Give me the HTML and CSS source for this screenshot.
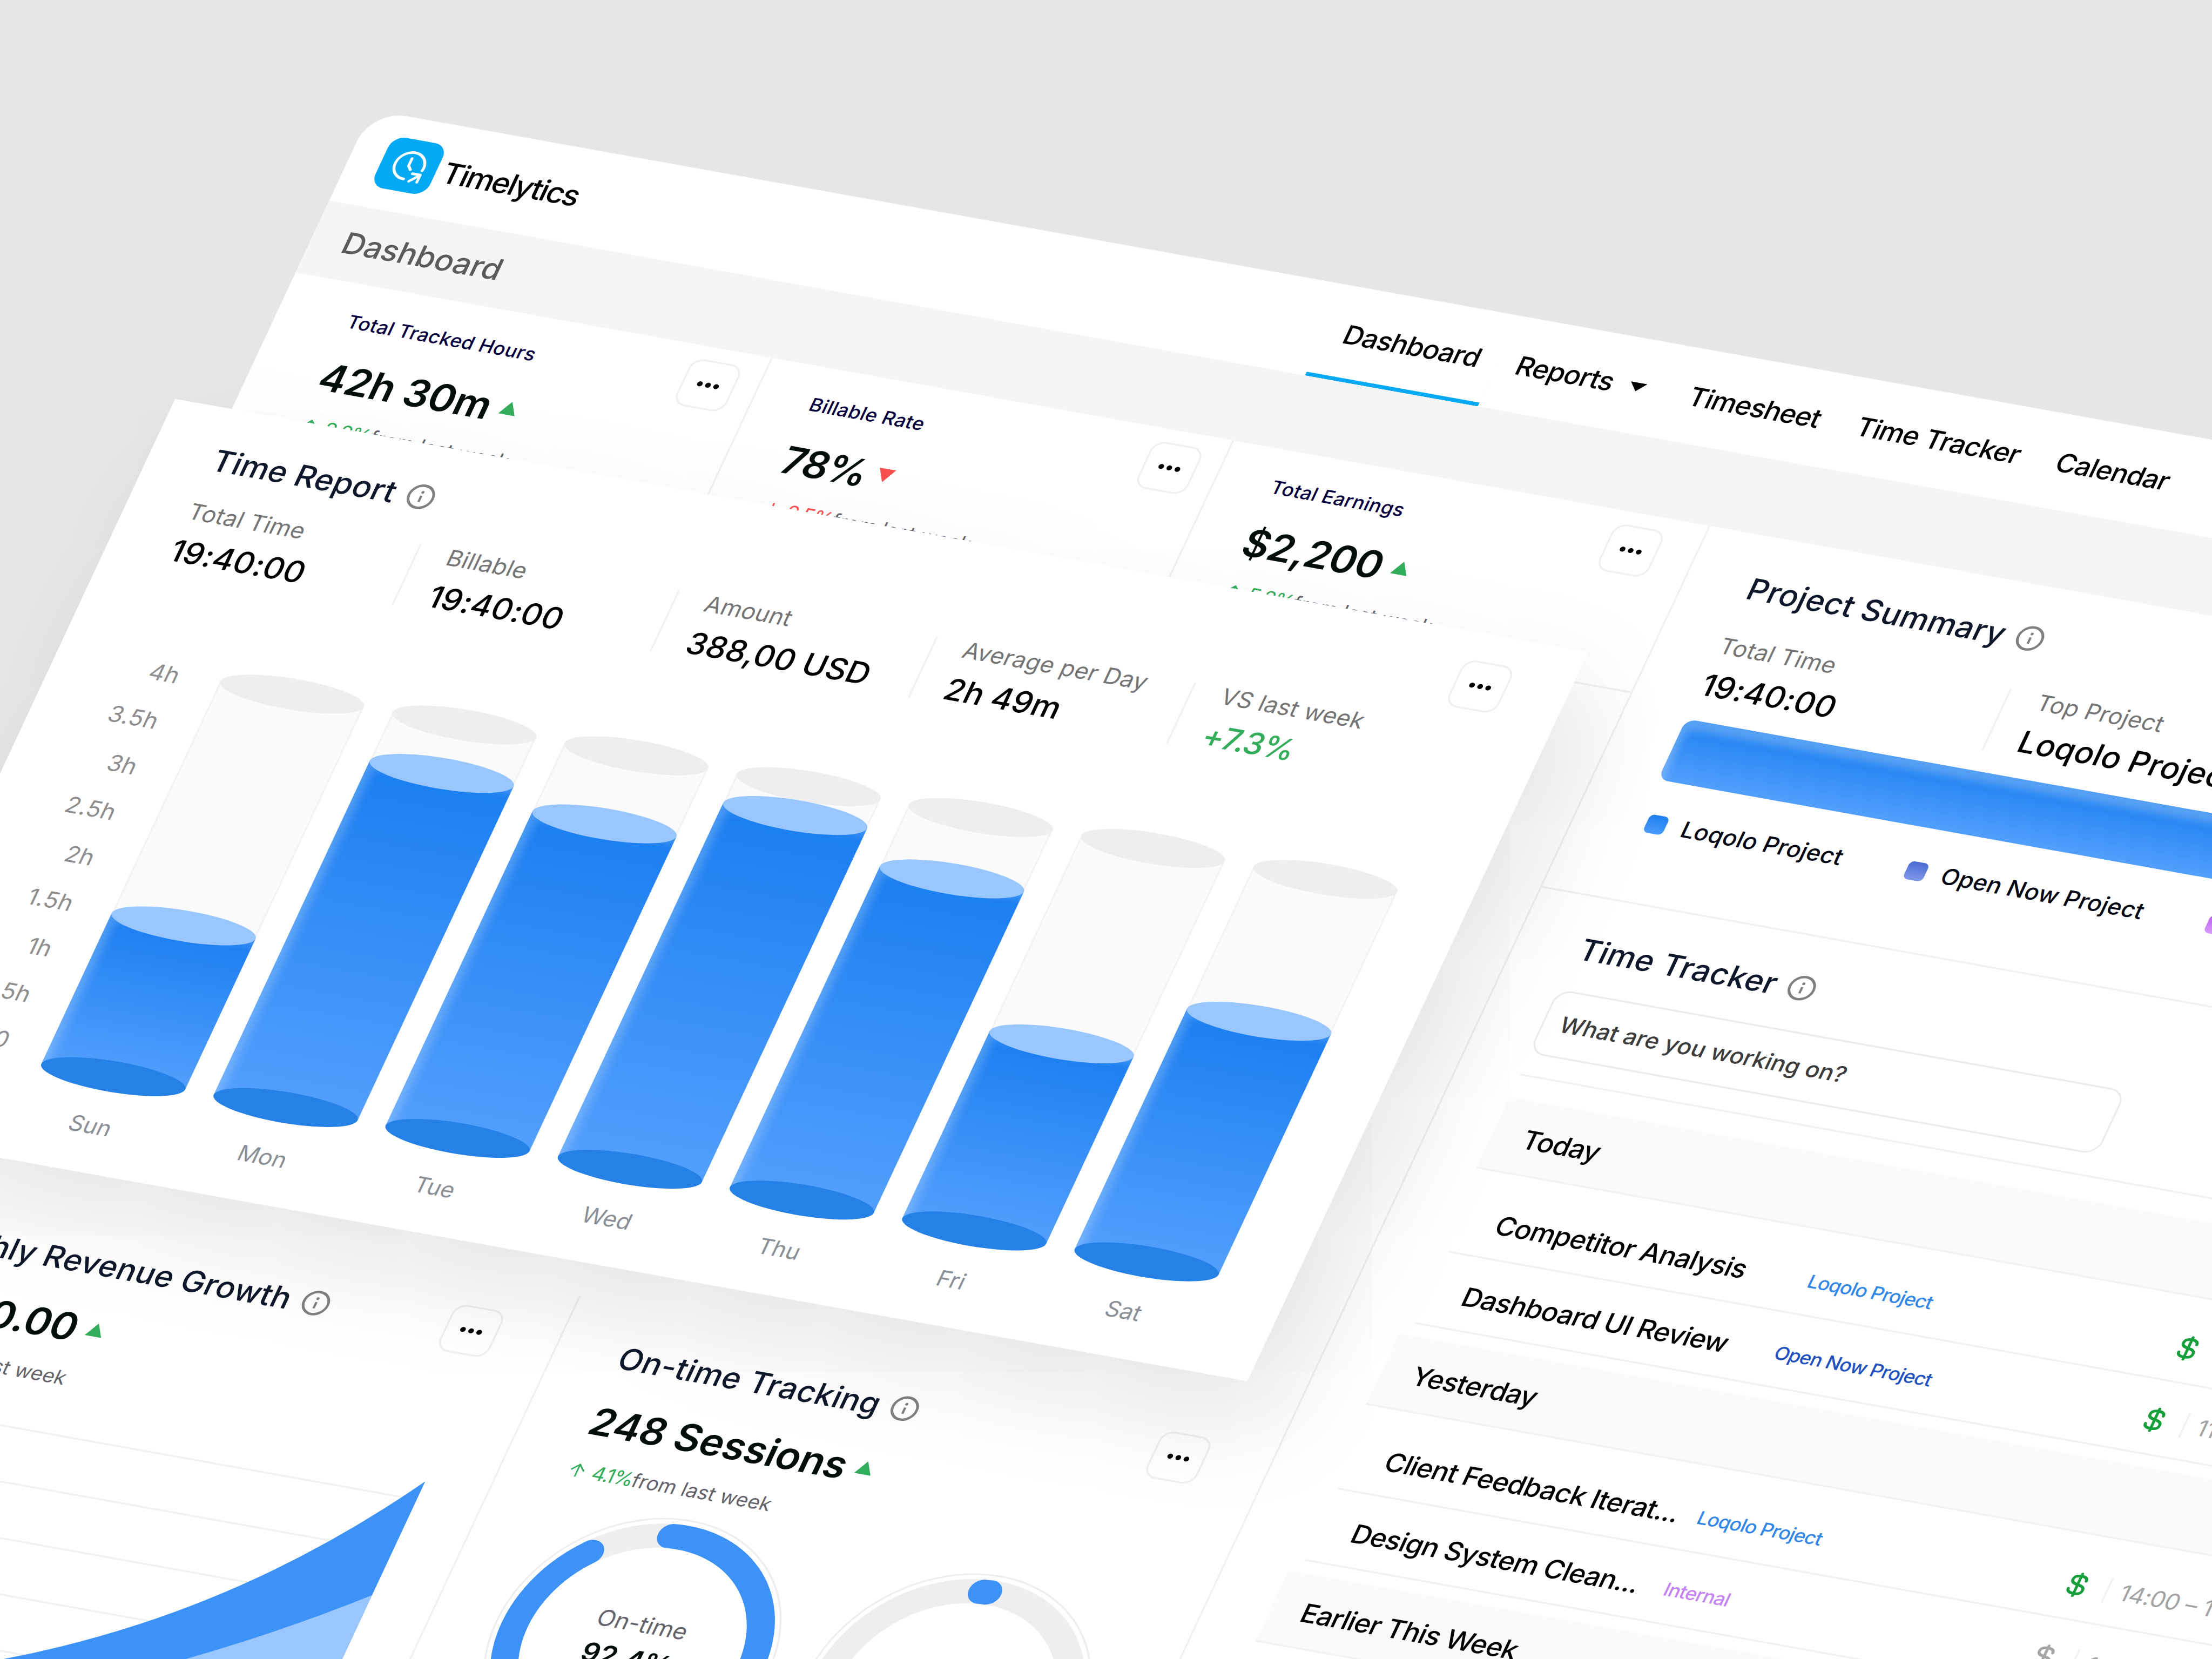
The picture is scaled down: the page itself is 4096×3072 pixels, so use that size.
FILE: index.html
```html
<!DOCTYPE html>
<html lang="en">
<head>
    <meta charset="UTF-8">
    <meta name="viewport" content="width=device-width, initial-scale=1.0">
    <title>Timelytics</title>
    <link rel="stylesheet" href="styles.css">
</head>
<body>
    <!-- shared icons -->
    <svg class="sprite" width="0" height="0">
        <symbol id="info" viewBox="0 0 60 60">
            <circle cx="30" cy="30" r="26" fill="none" stroke="currentColor" stroke-width="5.6"/>
            <circle cx="30" cy="19.500" r="3.200" fill="currentColor"/>
            <path d="M30 27.500v15" stroke="currentColor" stroke-width="5"/>
        </symbol>
        <symbol id="dots" viewBox="0 0 60 20">
            <circle cx="12.2" cy="10" r="5.8"/>
            <circle cx="30" cy="10" r="5.8"/>
            <circle cx="47.8" cy="10" r="5.8"/>
        </symbol>
        <symbol id="up" viewBox="0 0 42 42">
            <path d="M21 36V8M7 21L21 7l14 14" fill="none" stroke="currentColor" stroke-width="3.4"/>
        </symbol>
        <symbol id="down" viewBox="0 0 42 42">
            <path d="M21 6v28M7 21l14 14 14-14" fill="none" stroke="currentColor" stroke-width="3.4"/>
        </symbol>
        <symbol id="dollar" viewBox="0 0 40 60">
            <path d="M20 5v50M34 19c0-6-5-9-14-9S6 13 6 20c0 6 5 8 14 9.500S35 33 35 40s-6 10-15 10S5 47 5 41" fill="none" stroke="currentColor" stroke-width="6" stroke-linecap="round"/>
        </symbol>
    </svg>

    <div class="board">
        <header class="header">
            <div class="brand">
                <svg class="logo" viewBox="-60 -60 120 120">
                    <path d="M31 6A31 31 0 1 0 1 31" />
                    <path d="M-1-17V0l7 8" />
                    <path d="M14 34l17-18M14 16h17v17" />
                </svg>
                <span class="brand-name">Timelytics</span>
            </div>
            <nav class="nav">
                <a class="active">Dashboard</a>
                <a>Reports<span class="caret"></span></a>
                <a>Timesheet</a>
                <a>Time Tracker</a>
                <a>Calendar</a>
            </nav>
        </header>

        <div class="page-title">Dashboard</div>

        <div class="body">
            <main class="main">
                <div class="kpis">
                    <div class="kpi">
                        <div class="kpi-head">
                            <span class="kpi-label">Total Tracked Hours</span>
                            <button class="menu"><svg><use href="#dots"/></svg></button>
                        </div>
                        <div class="value">42h 30m<i class="tri tri-up"></i></div>
                        <div class="delta"><span class="green"><svg><use href="#up"/></svg>8.2%</span>from last week</div>
                    </div>
                    <div class="kpi">
                        <div class="kpi-head">
                            <span class="kpi-label">Billable Rate</span>
                            <button class="menu"><svg><use href="#dots"/></svg></button>
                        </div>
                        <div class="value tight">78%<i class="tri tri-down"></i></div>
                        <div class="delta"><span class="red"><svg><use href="#down"/></svg>2.5%</span>from last week</div>
                    </div>
                    <div class="kpi">
                        <div class="kpi-head">
                            <span class="kpi-label">Total Earnings</span>
                            <button class="menu"><svg><use href="#dots"/></svg></button>
                        </div>
                        <div class="value">$2,200<i class="tri tri-up"></i></div>
                        <div class="delta"><span class="green"><svg><use href="#up"/></svg>5.2%</span>from last week</div>
                    </div>
                </div>

                <div class="slot"></div>

                <div class="charts">
                    <section class="chart-card">
                        <div class="card-head">
                            <h2 class="title">Monthly Revenue Growth<svg class="info"><use href="#info"/></svg></h2>
                            <button class="menu"><svg><use href="#dots"/></svg></button>
                        </div>
                        <div class="value">$1,250.00<i class="tri tri-up"></i></div>
                        <div class="delta"><span class="green"><svg><use href="#up"/></svg>3.1%</span>from last week</div>
                        <svg class="area" viewBox="136 2950 1275 800">
                            <path class="grid" d="M136 3052.500H1411M136 3177H1411M136 3302H1411M136 3426.500H1411M136 3551H1411M136 3676H1411"/>
                            <path fill="#3d92f7" d="M1411 3008Q1143 3383 722 3568Q430 3690 136 3720V3750H1411Z"/>
                            <path fill="#99c7fd" d="M1411 3281Q1184 3458 900 3600L700 3680V3750H1411Z"/>
                        </svg>
                    </section>

                    <section class="chart-card">
                        <div class="card-head">
                            <h2 class="title">On-time Tracking<svg class="info"><use href="#info"/></svg></h2>
                            <button class="menu"><svg><use href="#dots"/></svg></button>
                        </div>
                        <div class="value">248 Sessions<i class="tri tri-up"></i></div>
                        <div class="delta"><span class="green"><svg><use href="#up"/></svg>4.1%</span>from last week</div>
                        <div class="donuts">
                            <div class="donut">
                                <svg viewBox="-303 -303 606 606">
                                    <circle class="halo" r="300"/>
                                    <circle class="ring" r="260"/>
                                    <circle class="arc" r="260" pathLength="360" stroke-dasharray="323.300 360" transform="rotate(-95.800)"/>
                                </svg>
                                <div class="donut-text">
                                    <span>On-time</span>
                                    <b>92.4%</b>
                                </div>
                            </div>
                            <div class="donut">
                                <svg viewBox="-303 -303 606 606">
                                    <circle class="halo" r="300"/>
                                    <circle class="ring" r="260"/>
                                    <circle class="arc" r="260" pathLength="360" stroke-dasharray="3 360" transform="rotate(-95.300)"/>
                                </svg>
                            </div>
                        </div>
                    </section>
                </div>
            </main>

            <aside class="side">
                <section class="summary">
                    <h2 class="title">Project Summary<svg class="info"><use href="#info"/></svg></h2>
                    <div class="stats wide">
                        <div class="stat"><span>Total Time</span><b>19:40:00</b></div>
                        <div class="stat"><span>Top Project</span><b>Loqolo Project</b></div>
                    </div>
                    <div class="share"></div>
                    <div class="legend">
                        <span><i class="sw-blue"></i>Loqolo Project</span>
                        <span><i class="sw-indigo"></i>Open Now Project</span>
                        <span><i class="sw-purple"></i></span>
                    </div>
                </section>

                <section class="tracker">
                    <h2 class="title">Time Tracker<svg class="info"><use href="#info"/></svg></h2>
                    <div class="task-input">What are you working on?</div>
                    <div class="entries">
                        <div class="day">Today</div>
                        <div class="group">
                            <div class="entry">
                                <span class="name">Competitor Analysis</span>
                                <span class="tag blue">Loqolo Project</span>
                                <svg class="bill"><use href="#dollar"/></svg>
                            </div>
                            <div class="entry">
                                <span class="name">Dashboard UI Review</span>
                                <span class="tag indigo">Open Now Project</span>
                                <svg class="bill"><use href="#dollar"/></svg>
                                <span class="time">11:00 – 12:30</span>
                            </div>
                        </div>
                        <div class="day">Yesterday</div>
                        <div class="group">
                            <div class="entry">
                                <span class="name">Client Feedback Iterat...</span>
                                <span class="tag blue">Loqolo Project</span>
                                <svg class="bill"><use href="#dollar"/></svg>
                                <span class="time">14:00 – 15:30</span>
                            </div>
                            <div class="entry">
                                <span class="name">Design System Clean...</span>
                                <span class="tag purple">Internal</span>
                                <svg class="bill off"><use href="#dollar"/></svg>
                                <span class="time">16:00 – 17:00</span>
                            </div>
                        </div>
                        <div class="day">Earlier This Week</div>
                    </div>
                </section>
            </aside>
        </div>

        <!-- lifted card -->
        <section class="report">
            <div class="card-head">
                <h2 class="title">Time Report<svg class="info"><use href="#info"/></svg></h2>
                <button class="menu"><svg><use href="#dots"/></svg></button>
            </div>
            <div class="stats">
                <div class="stat"><span>Total Time</span><b>19:40:00</b></div>
                <div class="stat"><span>Billable</span><b>19:40:00</b></div>
                <div class="stat"><span>Amount</span><b>388,00 USD</b></div>
                <div class="stat"><span>Average per Day</span><b>2h 49m</b></div>
                <div class="stat"><span>VS last week</span><b class="green">+7.3%</b></div>
            </div>
            <div class="plot">
                <div class="axis">
                    <span>4h</span>
                    <span>3.5h</span>
                    <span>3h</span>
                    <span>2.5h</span>
                    <span>2h</span>
                    <span>1.5h</span>
                    <span>1h</span>
                    <span>0.5h</span>
                    <span>0</span>
                </div>
                <div class="bars">
                    <div class="col"><div class="tube"><div class="fill" style="height: 39.4%"></div></div>Sun</div>
                    <div class="col"><div class="tube"><div class="fill" style="height: 87.3%"></div></div>Mon</div>
                    <div class="col"><div class="tube"><div class="fill" style="height: 82.2%"></div></div>Tue</div>
                    <div class="col"><div class="tube"><div class="fill" style="height: 92.5%"></div></div>Wed</div>
                    <div class="col"><div class="tube"><div class="fill" style="height: 84%"></div></div>Thu</div>
                    <div class="col"><div class="tube"><div class="fill" style="height: 48.9%"></div></div>Fri</div>
                    <div class="col"><div class="tube"><div class="fill" style="height: 62.9%"></div></div>Sat</div>
                </div>
            </div>
        </section>
    </div>
</body>
</html>
```

FILE: styles.css
```css
* {
    box-sizing: border-box;
}

body {
    margin: 0;
    width: 4096px;
    height: 3072px;
    overflow: hidden;
    background-color: #e6e6e6;
    font-family: Inter, sans-serif;
    color: #000;
}

.sprite {
    display: block;
}

/* whole dashboard is tilted in one go */
.board {
    width: 5600px;
    height: 3900px;
    background-color: #fff;
    border-top-left-radius: 76px;
    position: relative;
    transform-origin: 0 0;
    transform: matrix(0.84, 0.15053, -0.3614, 0.77338, 688, 203.6);
}

/* header */
.header {
    height: 217px;
    display: flex;
    padding-left: 69px;
}

.brand {
    width: 2082px;
    display: flex;
    align-items: center;
    gap: 15px;
}

.logo {
    width: 121px;
    height: 121px;
    border-radius: 29px;
    background-color: #03a9f4;
    fill: none;
    stroke: #fff;
    stroke-width: 6;
    stroke-linecap: round;
    stroke-linejoin: round;
}

.brand-name {
    font-size: 66px;
    font-weight: 500;
    letter-spacing: -0.042em;
}

.nav {
    display: flex;
}

.nav a {
    display: flex;
    align-items: center;
    padding: 0 41px;
    font-size: 59.4px;
    font-weight: 500;
    letter-spacing: -0.021em;
    white-space: nowrap;
}

.nav .active {
    box-shadow: inset 0 -9px #03a9f4;
}

.caret {
    border: 18px solid transparent;
    border-top: 20px solid #000;
    border-bottom: 0;
    margin: 4px 15px 0 35px;
}

.page-title {
    height: 172px;
    line-height: 172px;
    padding-left: 69px;
    background-color: #f5f5f5;
    color: #5b5b5b;
    font-size: 67px;
    font-weight: 500;
    letter-spacing: -0.003em;
}

.body {
    display: grid;
    grid-template-columns: 3115px 1fr;
}

/* shared pieces */
.title {
    margin: 0;
    display: flex;
    align-items: center;
    gap: 25px;
    font-size: 68px;
    line-height: 80px;
    font-weight: 500;
    letter-spacing: 0.007em;
    color: #0f172a;
    white-space: nowrap;
}

.info {
    width: 60px;
    height: 60px;
    color: #808080;
}

.menu {
    width: 112px;
    height: 112px;
    padding: 0;
    border: 4px solid #f0f0f0;
    border-radius: 27px;
    background: none;
    display: flex;
    align-items: center;
    justify-content: center;
}

.menu svg {
    width: 60px;
    height: 20px;
}

.value {
    display: flex;
    align-items: center;
    font-size: 86.5px;
    line-height: 106px;
    font-weight: 600;
    letter-spacing: -0.003em;
    color: #030d0b;
    padding-left: 2px;
}

.tight {
    letter-spacing: -0.03em;
}

.tri {
    border: 18px solid transparent;
    margin-left: 22px;
    margin-top: -8px;
}

.tri-up {
    border-top: 0;
    border-bottom: 31px solid #34ad5b;
}

.tri-down {
    border-bottom: 0;
    border-top: 31px solid #f94f4f;
}

.delta {
    display: flex;
    margin-top: 36px;
    font-size: 44px;
    line-height: 53px;
    color: #636369;
}

.delta span {
    display: flex;
    align-items: center;
    gap: 12px;
    letter-spacing: -0.05em;
}

.delta svg {
    width: 42px;
    height: 42px;
}

.green {
    color: #34ad5b;
}

.red {
    color: #f94f4f;
}

/* top row */
.kpis {
    height: 401px;
    padding: 0 33px;
    display: grid;
    grid-template-columns: 1019px 1017px 1fr;
    border-bottom: 4px solid #f1f1f1;
}

.kpi {
    padding: 30px 46px 0 120px;
    border-right: 4px solid #f1f1f1;
}

.kpi:last-child {
    border-right: 0;
}

.kpi-head, .card-head {
    display: flex;
    align-items: center;
    justify-content: space-between;
}

.kpi-label {
    font-size: 42px;
    font-weight: 500;
    letter-spacing: 0.012em;
    color: #05003d;
}

.kpi .value {
    margin-top: 24px;
    padding-left: 0;
    margin-left: -3px;
}

.slot {
    height: 1748px;
}

/* bottom row */
.charts {
    height: 1360px;
    display: grid;
    grid-template-columns: 1553px 1fr;
}

.chart-card {
    padding: 64px 130px 0 137px;
    border-right: 4px solid #f1f1f1;
}

.chart-card .value {
    margin-top: 41px;
}

.chart-card:last-child {
    padding-right: 137px;
    padding-left: 138px;
    border-right: 0;
}

.area {
    display: block;
    width: 1275px;
    height: 800px;
    margin-left: 1px;
}

.grid {
    stroke: #f1f1f1;
    stroke-width: 4;
}

.donuts {
    display: flex;
    gap: 77px;
    margin: 38px 0 0 -3px;
}

.donut {
    display: grid;
    width: 606px;
    height: 606px;
}

.donut > * {
    grid-area: 1 / 1;
}

.donut circle {
    fill: none;
}

.halo {
    stroke: #eee;
    stroke-width: 4;
}

.ring {
    stroke: #eee;
    stroke-width: 57;
}

.arc {
    stroke: #3d92f7;
    stroke-width: 57;
    stroke-linecap: round;
}

.donut-text {
    display: flex;
    flex-direction: column;
    align-items: center;
    padding-top: 221px;
    font-size: 51px;
    line-height: 60px;
    color: #636369;
}

.donut-text b {
    font-size: 60px;
    line-height: 72px;
    font-weight: 600;
    color: #030d0b;
    margin-top: 15px;
}

/* stats strip */
.stats {
    display: flex;
}

.stat {
    width: 569px;
    display: flex;
    flex-direction: column;
    gap: 22px;
    font-size: 51px;
    line-height: 60px;
    letter-spacing: 0.005em;
    color: #757575;
    white-space: nowrap;
    background: linear-gradient(#f1f1f1, #f1f1f1) right 65px top 11px / 4px 147px no-repeat;
}

.stat:last-child {
    background: none;
}

.stat b {
    font-size: 68.7px;
    line-height: 80px;
    font-weight: 500;
    color: #000;
}

.stat .green {
    color: #34ad5b;
    letter-spacing: -0.02em;
}

.wide .stat {
    width: 699px;
}

/* right panel */
.side {
    border-left: 4px solid #f1f1f1;
}

.side .title {
    margin-left: 3px;
}

.summary {
    height: 866px;
    padding: 82px 0 0 134px;
    border-bottom: 4px solid #f1f1f1;
}

.summary .stats {
    margin-top: 68px;
}

.share {
    height: 145px;
    margin-top: 44px;
    border-radius: 22px;
    background: linear-gradient(#1d80f0, #529ffd);
    box-shadow: inset 10px 22px 18px rgba(255, 255, 255, 0.25);
}

.legend {
    display: flex;
    gap: 141px;
    margin-top: 70px;
    padding-left: 18px;
    font-size: 51px;
    line-height: 60px;
    font-weight: 500;
    letter-spacing: 0.004em;
    color: #030712;
    white-space: nowrap;
}

.legend span {
    display: flex;
    align-items: center;
    gap: 35px;
}

.legend i {
    width: 43px;
    height: 43px;
    border-radius: 11px;
}

.sw-blue {
    background: linear-gradient(#1d80f0, #4b9afb);
}

.sw-indigo {
    background: linear-gradient(#4a6bd4, #8299e8);
}

.sw-purple {
    background: linear-gradient(#b95cf0, #d79bfb);
}

.tracker {
    padding: 79px 0 0 134px;
}

.task-input {
    width: 1254px;
    height: 154px;
    margin: 58px 0 0 -4px;
    padding-left: 35px;
    border: 4px solid #ececec;
    border-radius: 34px;
    font-size: 50.5px;
    line-height: 146px;
    font-weight: 500;
    color: #3c3c3c;
}

.entries {
    margin-top: 48px;
    padding-top: 52px;
    border-top: 4px solid #f1f1f1;
}

.day {
    height: 171px;
    padding-left: 68px;
    line-height: 174px;
    background-color: #fafafa;
    border-bottom: 4px solid #f2f2f2;
    font-size: 59.5px;
    font-weight: 500;
    letter-spacing: -0.021em;
}

.group {
    padding: 26px 0 27px 23px;
}

.entry {
    height: 171.2px;
    display: flex;
    align-items: center;
    padding: 13px 0 0 72px;
    border-bottom: 4px solid #f1f1f1;
    white-space: nowrap;
}

.name {
    width: 688px;
    font-size: 59.5px;
    font-weight: 500;
    letter-spacing: -0.021em;
}

.tag {
    width: 815px;
    font-size: 42px;
    font-weight: 500;
    letter-spacing: -0.028em;
}

.blue {
    color: #3388e6;
}

.indigo {
    color: #2151bf;
}

.purple {
    color: #c484f2;
}

.bill {
    width: 42px;
    height: 62px;
    color: #149f3a;
}

.off {
    color: #a6a6a6;
}

.time {
    margin-left: 43px;
    padding-left: 27px;
    border-left: 4px solid #f1f1f1;
    font-size: 51px;
    line-height: 60px;
    letter-spacing: -0.01em;
    color: #a3a3a3;
}

/* lifted time report */
.report {
    position: absolute;
    left: -125px;
    top: 716px;
    width: 3115px;
    height: 1746px;
    padding: 63px 131px 0 0;
    background-color: #fff;
    box-shadow: 85px 90px 230px rgba(0, 0, 0, 0.115);
}

.report .title, .report .stats {
    padding-left: 136px;
}

.report .stats {
    margin-top: 37px;
}

.plot {
    display: flex;
    margin-top: 232px;
}

.axis {
    width: 272px;
    margin-top: -50px;
    display: flex;
    flex-direction: column;
    text-align: right;
    font-size: 51px;
    line-height: 109px;
    letter-spacing: 0.01em;
    color: #8e8e8e;
}

.bars {
    display: flex;
    gap: 62.6px;
    padding-left: 88px;
}

.col {
    width: 317px;
    text-align: center;
    font-size: 50px;
    line-height: 60px;
    color: #8a9096;
}

.tube {
    position: relative;
    height: 916px;
    margin-bottom: 87px;
    background-color: #fafafa;
    box-shadow: inset 4px 0 #f3f3f3, inset -4px 0 #f3f3f3;
}

.tube::before, .fill::before, .fill::after {
    content: "";
    position: absolute;
    left: 0;
    top: -35px;
    width: 100%;
    height: 70px;
    border-radius: 50%;
    background-color: #eee;
}

.fill {
    position: absolute;
    left: 0;
    bottom: 0;
    width: 100%;
    background: linear-gradient(#1a7ef0, #529ffd);
    box-shadow: inset 14px 14px 20px rgba(255, 255, 255, 0.22);
}

.fill::before {
    background-color: #99c7fd;
}

.fill::after {
    top: auto;
    bottom: -35px;
    background-color: #2681e7;
}
```
